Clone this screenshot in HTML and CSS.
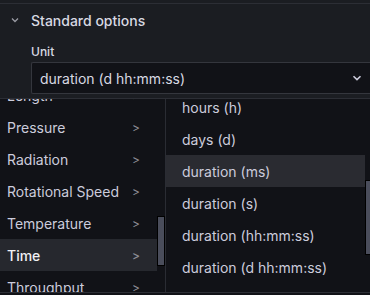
FILE: index.html
```html
<!DOCTYPE html>
<html lang="en">
<head>
    <meta charset="UTF-8">
    <title>Standard options</title>
    <link rel="stylesheet" href="styles.css">
</head>
<body>
    <div class="options">
        <div class="options-header">
            <svg class="collapse" width="8" height="6" viewBox="0 0 8 6">
                <path d="M1 1.5 L4 4.5 L7 1.5" fill="none" stroke="#9a9ba4" stroke-width="1.3"/>
            </svg>
            <span>Standard options</span>
        </div>
        <div class="field">
            <label class="field-label">Unit</label>
            <div class="unit-input">
                <span>duration (d hh:mm:ss)</span>
                <svg width="10" height="6" viewBox="0 0 10 6">
                    <path d="M1.5 1.2 L5 4.6 L8.5 1.2" fill="none" stroke="#ccccdc" stroke-width="1.6"/>
                </svg>
            </div>
        </div>
    </div>

    <div class="menu">
        <div class="menu-col categories">
            <ul class="menu-list cat-list">
                <li>Length <i>&gt;</i></li>
                <li>Pressure <i>&gt;</i></li>
                <li>Radiation <i>&gt;</i></li>
                <li>Rotational Speed <i>&gt;</i></li>
                <li>Temperature <i>&gt;</i></li>
                <li class="active">Time <i>&gt;</i></li>
                <li>Throughput <i>&gt;</i></li>
            </ul>
            <div class="track"><div class="thumb cat-thumb"></div></div>
        </div>
        <div class="menu-col units">
            <ul class="menu-list unit-list">
                <li>hours (h)</li>
                <li>days (d)</li>
                <li class="hover">duration (ms)</li>
                <li>duration (s)</li>
                <li>duration (hh:mm:ss)</li>
                <li>duration (d hh:mm:ss)</li>
            </ul>
            <div class="track track-right"><div class="thumb unit-thumb"></div></div>
        </div>
    </div>
</body>
</html>
```

FILE: styles.css
```css
* {
    box-sizing: border-box;
    margin: 0;
    padding: 0;
}

body {
    font-family: Inter, 'Noto Sans', sans-serif;
    background: #111217;
    color: #ccccdc;
    width: 370px;
    height: 295px;
    overflow: hidden;
}

.options {
    background: #1b1d22;
    padding-top: 3px;
    height: 98px;
}

.options-header {
    border-top: 1px solid #2c2e35;
    height: 33px;
    display: flex;
    align-items: center;
    font-size: 14px;
    font-weight: 500;
    color: #d8d9e2;
}

.collapse {
    margin-left: 11px;
    margin-right: 12px;
}

.field {
    padding-left: 31px;
}

.field-label {
    display: block;
    font-size: 12px;
    font-weight: 500;
    line-height: 16px;
    margin-top: 8px;
    color: #d8d9e2;
}

.unit-input {
    margin-top: 2px;
    height: 32px;
    background: #111217;
    border: 1px solid #34363d;
    border-right: none;
    border-radius: 2px 0 0 2px;
    display: flex;
    align-items: center;
    justify-content: space-between;
    padding: 0 8px;
    font-size: 14px;
    color: #d8d9e2;
}

.menu {
    border-top: 1px solid #2c2e35;
    border-bottom: 1px solid #2c2e35;
    height: 195px;
    display: flex;
    background: #111217;
}

.menu-col {
    display: flex;
    overflow: hidden;
}

.categories {
    width: 166px;
    border-right: 1px solid #2a2c33;
}

.units {
    width: 204px;
}

.menu-list {
    list-style: none;
    font-size: 14px;
}

.cat-list {
    width: 157px;
    margin-top: -20px;
}

.unit-list {
    width: 199px;
    margin-top: -8px;
}

.menu-list li {
    height: 32px;
    display: flex;
    align-items: center;
    justify-content: space-between;
    white-space: nowrap;
}

.cat-list li {
    padding: 0 17px 0 7px;
}

.unit-list li {
    padding-left: 16px;
}

.menu-list i {
    font-style: normal;
    font-size: 12px;
    color: #8d8e96;
}

.menu-list .active {
    background: #26282e;
    color: #f0f0f4;
    font-weight: 500;
}

.menu-list .hover {
    background: #2a2b31;
}

.track {
    width: 8px;
}

.track-right {
    width: 5px;
}

.thumb {
    background: #4a4d5b;
    border: 1px solid #000;
}

.cat-thumb {
    margin-top: 117px;
    height: 50px;
}

.unit-thumb {
    margin-top: 81px;
    height: 75px;
    width: 8px;
}
```
